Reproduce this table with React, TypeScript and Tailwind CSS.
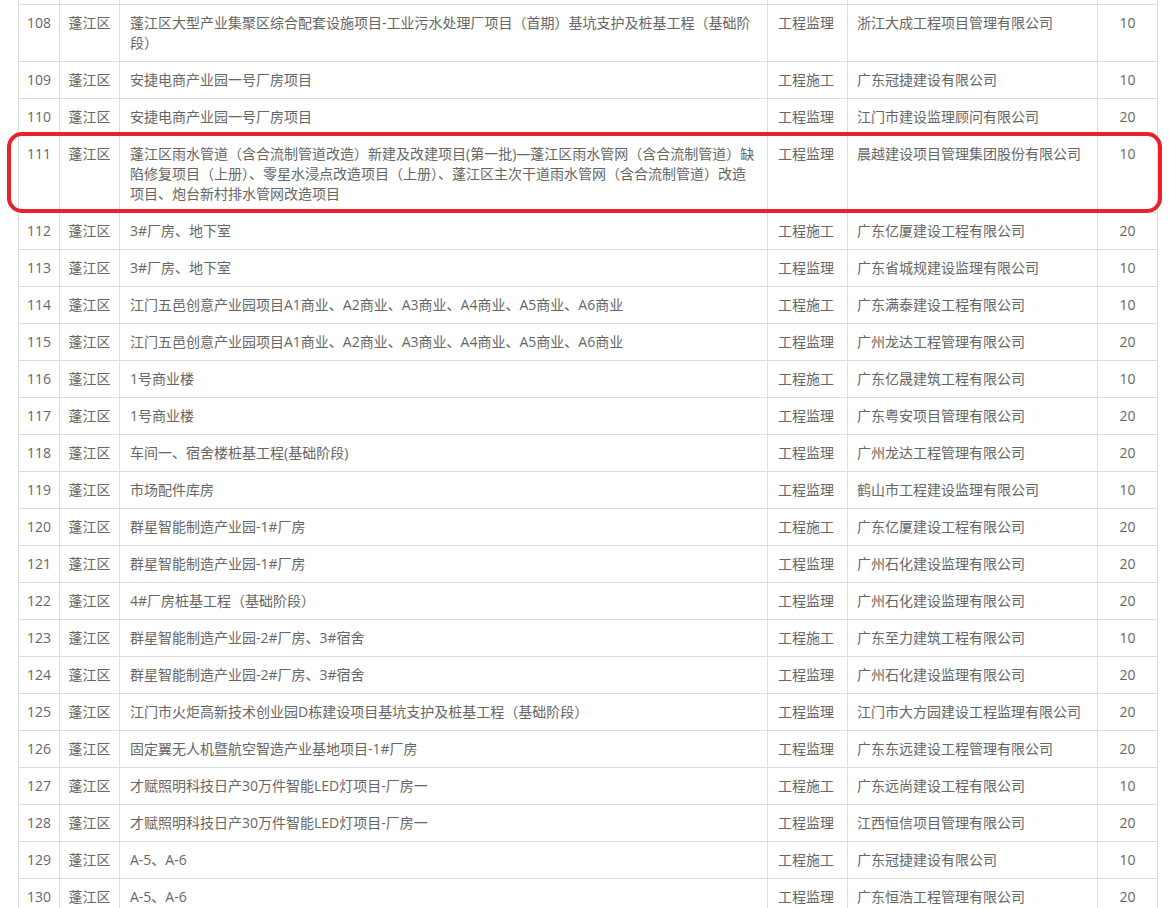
type Row = {
  no: number;
  area: string;
  name: string[];
  kind: string;
  company: string;
  score: number;
  mark?: boolean;
};

const rows: Row[] = [
  {
    no: 108,
    area: "蓬江区",
    name: [
      "蓬江区大型产业集聚区综合配套设施项目-工业污水处理厂项目（首期）基坑支护及桩基工程（基础阶",
      "段）",
    ],
    kind: "工程监理",
    company: "浙江大成工程项目管理有限公司",
    score: 10,
  },
  { no: 109, area: "蓬江区", name: ["安捷电商产业园一号厂房项目"], kind: "工程施工", company: "广东冠捷建设有限公司", score: 10 },
  { no: 110, area: "蓬江区", name: ["安捷电商产业园一号厂房项目"], kind: "工程监理", company: "江门市建设监理顾问有限公司", score: 20 },
  {
    no: 111,
    area: "蓬江区",
    name: [
      "蓬江区雨水管道（含合流制管道改造）新建及改建项目(第一批)—蓬江区雨水管网（含合流制管道）缺",
      "陷修复项目（上册）、零星水浸点改造项目（上册）、蓬江区主次干道雨水管网（含合流制管道）改造",
      "项目、炮台新村排水管网改造项目",
    ],
    kind: "工程监理",
    company: "晨越建设项目管理集团股份有限公司",
    score: 10,
    mark: true,
  },
  { no: 112, area: "蓬江区", name: ["3#厂房、地下室"], kind: "工程施工", company: "广东亿厦建设工程有限公司", score: 20 },
  { no: 113, area: "蓬江区", name: ["3#厂房、地下室"], kind: "工程监理", company: "广东省城规建设监理有限公司", score: 10 },
  {
    no: 114,
    area: "蓬江区",
    name: ["江门五邑创意产业园项目A1商业、A2商业、A3商业、A4商业、A5商业、A6商业"],
    kind: "工程施工",
    company: "广东满泰建设工程有限公司",
    score: 10,
  },
  {
    no: 115,
    area: "蓬江区",
    name: ["江门五邑创意产业园项目A1商业、A2商业、A3商业、A4商业、A5商业、A6商业"],
    kind: "工程监理",
    company: "广州龙达工程管理有限公司",
    score: 20,
  },
  { no: 116, area: "蓬江区", name: ["1号商业楼"], kind: "工程施工", company: "广东亿晟建筑工程有限公司", score: 10 },
  { no: 117, area: "蓬江区", name: ["1号商业楼"], kind: "工程监理", company: "广东粤安项目管理有限公司", score: 20 },
  { no: 118, area: "蓬江区", name: ["车间一、宿舍楼桩基工程(基础阶段)"], kind: "工程监理", company: "广州龙达工程管理有限公司", score: 20 },
  { no: 119, area: "蓬江区", name: ["市场配件库房"], kind: "工程监理", company: "鹤山市工程建设监理有限公司", score: 10 },
  { no: 120, area: "蓬江区", name: ["群星智能制造产业园-1#厂房"], kind: "工程施工", company: "广东亿厦建设工程有限公司", score: 20 },
  { no: 121, area: "蓬江区", name: ["群星智能制造产业园-1#厂房"], kind: "工程监理", company: "广州石化建设监理有限公司", score: 20 },
  { no: 122, area: "蓬江区", name: ["4#厂房桩基工程（基础阶段）"], kind: "工程监理", company: "广州石化建设监理有限公司", score: 20 },
  { no: 123, area: "蓬江区", name: ["群星智能制造产业园-2#厂房、3#宿舍"], kind: "工程施工", company: "广东至力建筑工程有限公司", score: 10 },
  { no: 124, area: "蓬江区", name: ["群星智能制造产业园-2#厂房、3#宿舍"], kind: "工程监理", company: "广州石化建设监理有限公司", score: 20 },
  {
    no: 125,
    area: "蓬江区",
    name: ["江门市火炬高新技术创业园D栋建设项目基坑支护及桩基工程（基础阶段）"],
    kind: "工程监理",
    company: "江门市大方园建设工程监理有限公司",
    score: 20,
  },
  {
    no: 126,
    area: "蓬江区",
    name: ["固定翼无人机暨航空智造产业基地项目-1#厂房"],
    kind: "工程监理",
    company: "广东东远建设工程管理有限公司",
    score: 20,
  },
  {
    no: 127,
    area: "蓬江区",
    name: ["才赋照明科技日产30万件智能LED灯项目-厂房一"],
    kind: "工程施工",
    company: "广东远尚建设工程有限公司",
    score: 10,
  },
  {
    no: 128,
    area: "蓬江区",
    name: ["才赋照明科技日产30万件智能LED灯项目-厂房一"],
    kind: "工程监理",
    company: "江西恒信项目管理有限公司",
    score: 20,
  },
  { no: 129, area: "蓬江区", name: ["A-5、A-6"], kind: "工程施工", company: "广东冠捷建设有限公司", score: 10 },
  { no: 130, area: "蓬江区", name: ["A-5、A-6"], kind: "工程监理", company: "广东恒浩工程管理有限公司", score: 20 },
];

const grid = "grid grid-cols-[41px_60px_648px_80px_250px_61px] border-b border-[#dddddd]";
const cell = "border-l border-[#dddddd] py-2 leading-5 whitespace-nowrap";

export default function App() {
  return (
    <div
      className="min-h-screen bg-white pl-[18px] text-[14px] text-[#666666]"
      style={{ fontFamily: '"Open Sans", "Noto Sans CJK SC", sans-serif' }}
    >
      <div className="w-[1140px]">
        {/* tail of the previous row, cut off by the top edge */}
        <div className={grid + " h-[5px]"}>
          <div className="border-l border-[#dddddd]" />
          <div className="border-l border-[#dddddd]" />
          <div className="border-l border-[#dddddd]" />
          <div className="border-l border-[#dddddd]" />
          <div className="border-l border-[#dddddd]" />
          <div className="border-l border-r border-[#dddddd]" />
        </div>
        {rows.map((r) => (
          <div key={r.no} className={grid + " relative"}>
            <div className={cell + " text-center"}>{r.no}</div>
            <div className={cell + " text-center"}>{r.area}</div>
            <div className={cell + " px-[10px]"}>
              {r.name.map((line, i) => (
                <div key={i}>{line}</div>
              ))}
            </div>
            <div className={cell + " px-[10px]"}>{r.kind}</div>
            <div className={cell + " pl-[9px]"}>{r.company}</div>
            <div className={cell + " border-r text-center"}>{r.score}</div>
            {r.mark && (
              <div className="pointer-events-none absolute -left-[11px] -top-[4px] h-[81px] w-[1155px] rounded-[15px] border-4 border-[#e8212a]" />
            )}
          </div>
        ))}
      </div>
    </div>
  );
}
